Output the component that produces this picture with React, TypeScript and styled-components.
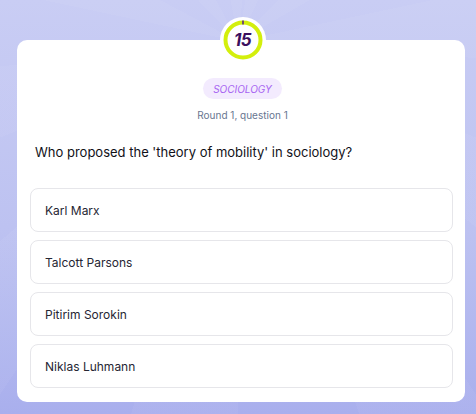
import styled, { createGlobalStyle } from "styled-components";

const GlobalStyle = createGlobalStyle`
  html, body {
    margin: 0;
    padding: 0;
  }
  body {
    font-family: Inter, "Noto Sans", "Liberation Sans", sans-serif;
    background: #bfc4f2;
  }
`;

const options = ["Karl Marx", "Talcott Parsons", "Pitirim Sorokin", "Niklas Luhmann"];

const App = () => {
  return (
    <Page>
      <GlobalStyle />
      <Card>
        <Timer>
          <svg width="40" height="40" viewBox="0 0 40 40">
            <circle cx="20" cy="20" r="17.5" fill="none" stroke="#d3ef0c" strokeWidth="4" />
            <rect x="19.2" y="0.5" width="1.6" height="4" fill="#5b2a86" />
          </svg>
          <TimerValue>15</TimerValue>
        </Timer>
        <Category>SOCIOLOGY</Category>
        <RoundInfo>Round 1, question 1</RoundInfo>
        <Question>Who proposed the 'theory of mobility' in sociology?</Question>
        <Options>
          {options.map((o) => (
            <Option key={o}>{o}</Option>
          ))}
        </Options>
      </Card>
    </Page>
  );
};

export default App;

const Page = styled.div`
  width: 476px;
  height: 414px;
  box-sizing: border-box;
  padding: 40px 11px 0 17px;
  overflow: hidden;
  background:
    repeating-conic-gradient(from 10deg at 50% 10%, rgba(255, 255, 255, 0.045) 0deg 16deg, rgba(255, 255, 255, 0) 16deg 34deg),
    linear-gradient(180deg, #c9cdf4 0%, #bdc2f1 55%, #a9afed 100%);
`;

const Card = styled.div`
  background: #ffffff;
  border-radius: 10px;
  display: flex;
  flex-direction: column;
  align-items: center;
  padding: 0 12px 14px 13px;
`;

const Timer = styled.div`
  width: 46px;
  height: 46px;
  margin-top: -23px;
  margin-left: 2px;
  border-radius: 50%;
  background: #ffffff;
  display: flex;
  align-items: center;
  justify-content: center;
  position: relative;

  svg {
    position: absolute;
    top: 3px;
    left: 3px;
  }
`;

const TimerValue = styled.span`
  position: relative;
  font-size: 17px;
  font-weight: 700;
  font-style: italic;
  color: #3a0f5e;
  letter-spacing: -0.5px;
`;

const Category = styled.div`
  margin-top: 15px;
  margin-left: 2px;
  height: 21px;
  padding: 0 10px;
  border-radius: 11px;
  background: #f3ebfe;
  color: #a764f2;
  font-size: 10px;
  font-style: italic;
  display: flex;
  align-items: center;
`;

const RoundInfo = styled.div`
  margin-top: 9px;
  margin-left: 2px;
  font-size: 10px;
  color: #687690;
  line-height: 14px;
`;

const Question = styled.div`
  align-self: stretch;
  margin-top: 20px;
  padding-left: 5px;
  font-size: 13px;
  line-height: 20px;
  color: #111118;
`;

const Options = styled.div`
  align-self: stretch;
  margin-top: 26px;
  display: flex;
  flex-direction: column;
  gap: 8px;
`;

const Option = styled.div`
  height: 44px;
  box-sizing: border-box;
  border: 1px solid #e6e6ea;
  border-radius: 8px;
  padding: 0 14px;
  display: flex;
  align-items: center;
  font-size: 12px;
  color: #262633;
`;
